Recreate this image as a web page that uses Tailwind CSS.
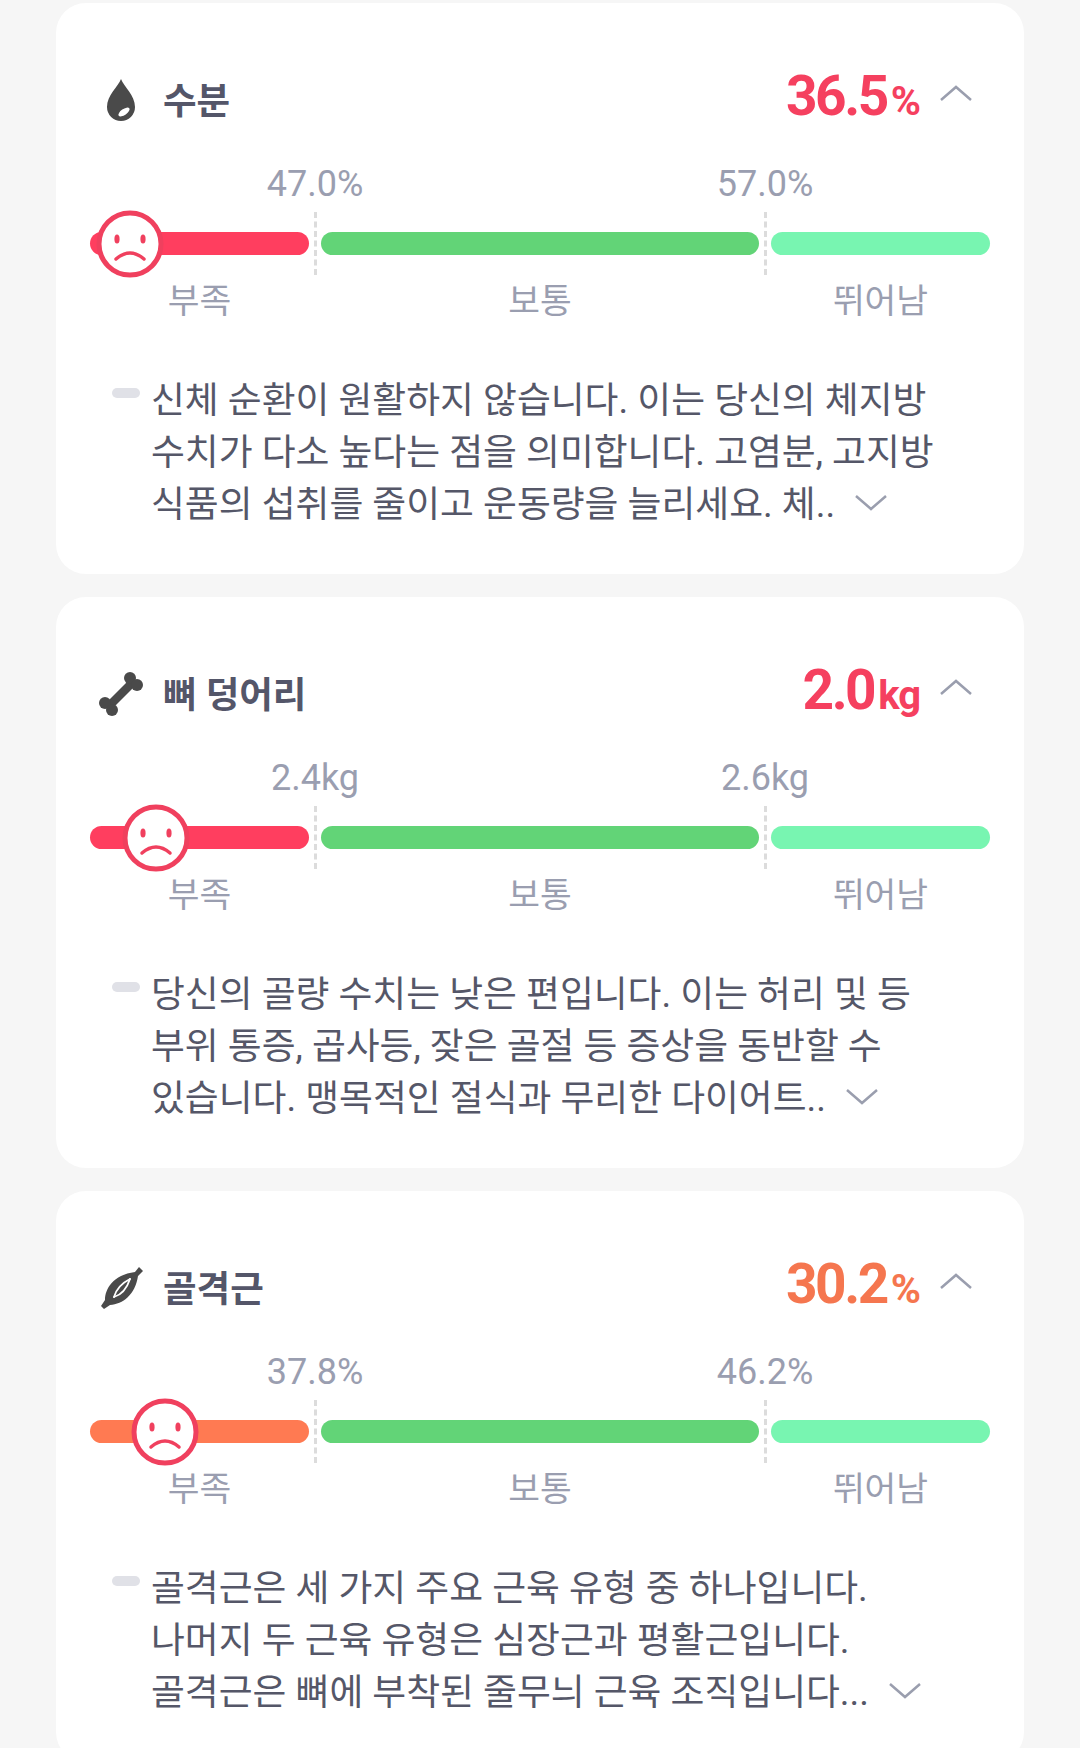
<!DOCTYPE html>
<html lang="ko">
<head>
  <meta charset="UTF-8">
  <title>체성분</title>
  <script src="https://cdn.jsdelivr.net/npm/@tailwindcss/browser@4"></script>
</head>
<body class="bg-[#f6f6f6] font-['Roboto','Noto_Sans_CJK_KR',sans-serif] h-[1748px] overflow-hidden">
  <main class="flex flex-col gap-[23px] pt-[3px] px-[56px]">

    <!-- 수분 -->
    <section class="bg-white rounded-[30px] h-[571px] shrink-0 pt-[67px] px-[34px]">
      <div class="flex items-center h-[60px]">
        <div class="w-[73px] pl-[10px] flex items-center">
          <svg class="w-[42px] h-[42px]" viewBox="0 0 42 42">
            <path d="M21 0 C24 8 35 16 35 28 A14 14 0 0 1 7 28 C7 16 18 8 21 0 Z" fill="#4a4a4a"/>
            <ellipse cx="24" cy="33" rx="6.5" ry="3" transform="rotate(-35 24 33)" fill="#fff"/>
          </svg>
        </div>
        <h2 class="text-[36.5px] font-bold text-[#545669] mt-[4px]">수분</h2>
        <div class="ml-auto flex items-baseline text-[#f5405f] font-bold -mt-[8px]">
          <span class="text-[55px] leading-none tracking-[-2.5px]">36.5</span><span class="text-[41px] leading-none ml-[4px] tracking-[-1px]">%</span>
        </div>
        <svg class="w-[32px] h-[16px] ml-[20px] mr-[18px] -mt-[14px]" viewBox="0 0 32 16" fill="none" stroke="#9a9eae" stroke-width="2.5"><path d="M1 15 L16 2 L31 15"/></svg>
      </div>
      <div class="w-[450px] mx-auto flex justify-between h-[40px] mt-[34px] text-[36px] leading-[40px] text-[#9a9eb0]">
        <div class="w-0 flex justify-center whitespace-nowrap">47.0%</div>
        <div class="w-0 flex justify-center whitespace-nowrap">57.0%</div>
      </div>
      <div class="relative flex items-center h-[63px] mt-[8px]">
        <div class="w-[219px] h-[23px] rounded-full bg-[#ff3e5f]"></div>
        <div class="w-[12px] flex justify-center"><div class="h-[63px] border-l-[3px] border-dashed border-[#dcdcdc]"></div></div>
        <div class="w-[438px] h-[23px] rounded-full bg-[#62d477]"></div>
        <div class="w-[12px] flex justify-center"><div class="h-[63px] border-l-[3px] border-dashed border-[#dcdcdc]"></div></div>
        <div class="w-[219px] h-[23px] rounded-full bg-[#78f5b1]"></div>
        <svg class="absolute left-[6px] top-[-2px] w-[68px] h-[68px]" viewBox="0 0 68 68">
          <circle cx="34" cy="34" r="31" fill="#fff" stroke="#f0405e" stroke-width="5"/>
          <ellipse cx="21" cy="29" rx="2.6" ry="4.5" fill="#f0405e"/>
          <ellipse cx="47" cy="29" rx="2.6" ry="4.5" fill="#f0405e"/>
          <path d="M20 49 Q34 37 48 49" fill="none" stroke="#f0405e" stroke-width="3.5" stroke-linecap="round"/>
        </svg>
      </div>
      <div class="flex gap-[12px] mt-[6px] text-[34.5px] leading-[40px] text-center text-[#9a9eb0]">
        <div class="w-[219px]">부족</div>
        <div class="w-[438px]">보통</div>
        <div class="w-[219px]">뛰어남</div>
      </div>
      <div class="flex mt-[54px] ml-[22px]">
        <div class="w-[28px] h-[10px] rounded-full bg-[#e0e1e7] mt-[13px] shrink-0"></div>
        <p class="ml-[11px] text-[36.8px] leading-[52px] text-[#555768] whitespace-nowrap">신체 순환이 원활하지 않습니다. 이는 당신의 체지방<br>수치가 다소 높다는 점을 의미합니다. 고염분, 고지방<br>식품의 섭취를 줄이고 운동량을 늘리세요. 체..<svg class="inline-block w-[32px] h-[16px] ml-[20px] align-[6px]" viewBox="0 0 32 16" fill="none" stroke="#9a9eae" stroke-width="2.5"><path d="M1 1 L16 14 L31 1"/></svg></p>
      </div>
    </section>

    <!-- 뼈 덩어리 -->
    <section class="bg-white rounded-[30px] h-[571px] shrink-0 pt-[67px] px-[34px]">
      <div class="flex items-center h-[60px]">
        <div class="w-[73px] pl-[9px] flex items-center">
          <svg class="w-[44px] h-[44px]" viewBox="0 0 44 44">
            <g fill="#4a4a4a">
              <path d="M8 30 L30 8 L36 14 L14 36 Z"/>
              <circle cx="31" cy="6" r="6"/><circle cx="38" cy="13" r="6"/>
              <circle cx="6" cy="31" r="6"/><circle cx="13" cy="38" r="6"/>
            </g>
          </svg>
        </div>
        <h2 class="text-[36.5px] font-bold text-[#545669] mt-[4px]">뼈 덩어리</h2>
        <div class="ml-auto flex items-baseline text-[#f5405f] font-bold -mt-[8px]">
          <span class="text-[55px] leading-none tracking-[-2.5px]">2.0</span><span class="text-[40px] leading-none ml-[4px] tracking-[-1px]">kg</span>
        </div>
        <svg class="w-[32px] h-[16px] ml-[20px] mr-[18px] -mt-[14px]" viewBox="0 0 32 16" fill="none" stroke="#9a9eae" stroke-width="2.5"><path d="M1 15 L16 2 L31 15"/></svg>
      </div>
      <div class="w-[450px] mx-auto flex justify-between h-[40px] mt-[34px] text-[36px] leading-[40px] text-[#9a9eb0]">
        <div class="w-0 flex justify-center whitespace-nowrap">2.4kg</div>
        <div class="w-0 flex justify-center whitespace-nowrap">2.6kg</div>
      </div>
      <div class="relative flex items-center h-[63px] mt-[8px]">
        <div class="w-[219px] h-[23px] rounded-full bg-[#ff3e5f]"></div>
        <div class="w-[12px] flex justify-center"><div class="h-[63px] border-l-[3px] border-dashed border-[#dcdcdc]"></div></div>
        <div class="w-[438px] h-[23px] rounded-full bg-[#62d477]"></div>
        <div class="w-[12px] flex justify-center"><div class="h-[63px] border-l-[3px] border-dashed border-[#dcdcdc]"></div></div>
        <div class="w-[219px] h-[23px] rounded-full bg-[#78f5b1]"></div>
        <svg class="absolute left-[32px] top-[-2px] w-[68px] h-[68px]" viewBox="0 0 68 68">
          <circle cx="34" cy="34" r="31" fill="#fff" stroke="#f0405e" stroke-width="5"/>
          <ellipse cx="21" cy="29" rx="2.6" ry="4.5" fill="#f0405e"/>
          <ellipse cx="47" cy="29" rx="2.6" ry="4.5" fill="#f0405e"/>
          <path d="M20 49 Q34 37 48 49" fill="none" stroke="#f0405e" stroke-width="3.5" stroke-linecap="round"/>
        </svg>
      </div>
      <div class="flex gap-[12px] mt-[6px] text-[34.5px] leading-[40px] text-center text-[#9a9eb0]">
        <div class="w-[219px]">부족</div>
        <div class="w-[438px]">보통</div>
        <div class="w-[219px]">뛰어남</div>
      </div>
      <div class="flex mt-[54px] ml-[22px]">
        <div class="w-[28px] h-[10px] rounded-full bg-[#e0e1e7] mt-[13px] shrink-0"></div>
        <p class="ml-[11px] text-[36.8px] leading-[52px] text-[#555768] whitespace-nowrap">당신의 골량 수치는 낮은 편입니다. 이는 허리 및 등<br>부위 통증, 곱사등, 잦은 골절 등 증상을 동반할 수<br>있습니다. 맹목적인 절식과 무리한 다이어트..<svg class="inline-block w-[32px] h-[16px] ml-[20px] align-[6px]" viewBox="0 0 32 16" fill="none" stroke="#9a9eae" stroke-width="2.5"><path d="M1 1 L16 14 L31 1"/></svg></p>
      </div>
    </section>

    <!-- 골격근 -->
    <section class="bg-white rounded-[30px] h-[571px] shrink-0 pt-[67px] px-[34px]">
      <div class="flex items-center h-[60px]">
        <div class="w-[73px] pl-[11px] flex items-center">
          <svg class="w-[42px] h-[42px]" viewBox="0 0 42 42">
            <path d="M3 42 L0 39 L4 33 C4 22 12 8 34 5 L38 0 L42 4 L37 9 C34 28 22 37 9 38 Z" fill="#4a4a4a"/>
            <path d="M13 30 C15 23 21 16 29 12" fill="none" stroke="#fff" stroke-width="1.8" stroke-linecap="round"/>
            <path d="M13 30 C20 28 26 21 29 12" fill="none" stroke="#fff" stroke-width="1.8" stroke-linecap="round"/>
          </svg>
        </div>
        <h2 class="text-[36.5px] font-bold text-[#545669] mt-[4px]">골격근</h2>
        <div class="ml-auto flex items-baseline text-[#f5764f] font-bold -mt-[8px]">
          <span class="text-[55px] leading-none tracking-[-2.5px]">30.2</span><span class="text-[41px] leading-none ml-[4px] tracking-[-1px]">%</span>
        </div>
        <svg class="w-[32px] h-[16px] ml-[20px] mr-[18px] -mt-[14px]" viewBox="0 0 32 16" fill="none" stroke="#9a9eae" stroke-width="2.5"><path d="M1 15 L16 2 L31 15"/></svg>
      </div>
      <div class="w-[450px] mx-auto flex justify-between h-[40px] mt-[34px] text-[36px] leading-[40px] text-[#9a9eb0]">
        <div class="w-0 flex justify-center whitespace-nowrap">37.8%</div>
        <div class="w-0 flex justify-center whitespace-nowrap">46.2%</div>
      </div>
      <div class="relative flex items-center h-[63px] mt-[8px]">
        <div class="w-[219px] h-[23px] rounded-full bg-[#ff7a52]"></div>
        <div class="w-[12px] flex justify-center"><div class="h-[63px] border-l-[3px] border-dashed border-[#dcdcdc]"></div></div>
        <div class="w-[438px] h-[23px] rounded-full bg-[#62d477]"></div>
        <div class="w-[12px] flex justify-center"><div class="h-[63px] border-l-[3px] border-dashed border-[#dcdcdc]"></div></div>
        <div class="w-[219px] h-[23px] rounded-full bg-[#78f5b1]"></div>
        <svg class="absolute left-[41px] top-[-2px] w-[68px] h-[68px]" viewBox="0 0 68 68">
          <circle cx="34" cy="34" r="31" fill="#fff" stroke="#f0405e" stroke-width="5"/>
          <ellipse cx="21" cy="29" rx="2.6" ry="4.5" fill="#f0405e"/>
          <ellipse cx="47" cy="29" rx="2.6" ry="4.5" fill="#f0405e"/>
          <path d="M20 49 Q34 37 48 49" fill="none" stroke="#f0405e" stroke-width="3.5" stroke-linecap="round"/>
        </svg>
      </div>
      <div class="flex gap-[12px] mt-[6px] text-[34.5px] leading-[40px] text-center text-[#9a9eb0]">
        <div class="w-[219px]">부족</div>
        <div class="w-[438px]">보통</div>
        <div class="w-[219px]">뛰어남</div>
      </div>
      <div class="flex mt-[54px] ml-[22px]">
        <div class="w-[28px] h-[10px] rounded-full bg-[#e0e1e7] mt-[13px] shrink-0"></div>
        <p class="ml-[11px] text-[36.8px] leading-[52px] text-[#555768] whitespace-nowrap">골격근은 세 가지 주요 근육 유형 중 하나입니다.<br>나머지 두 근육 유형은 심장근과 평활근입니다.<br>골격근은 뼈에 부착된 줄무늬 근육 조직입니다...<svg class="inline-block w-[32px] h-[16px] ml-[20px] align-[6px]" viewBox="0 0 32 16" fill="none" stroke="#9a9eae" stroke-width="2.5"><path d="M1 1 L16 14 L31 1"/></svg></p>
      </div>
    </section>

  </main>
</body>
</html>
